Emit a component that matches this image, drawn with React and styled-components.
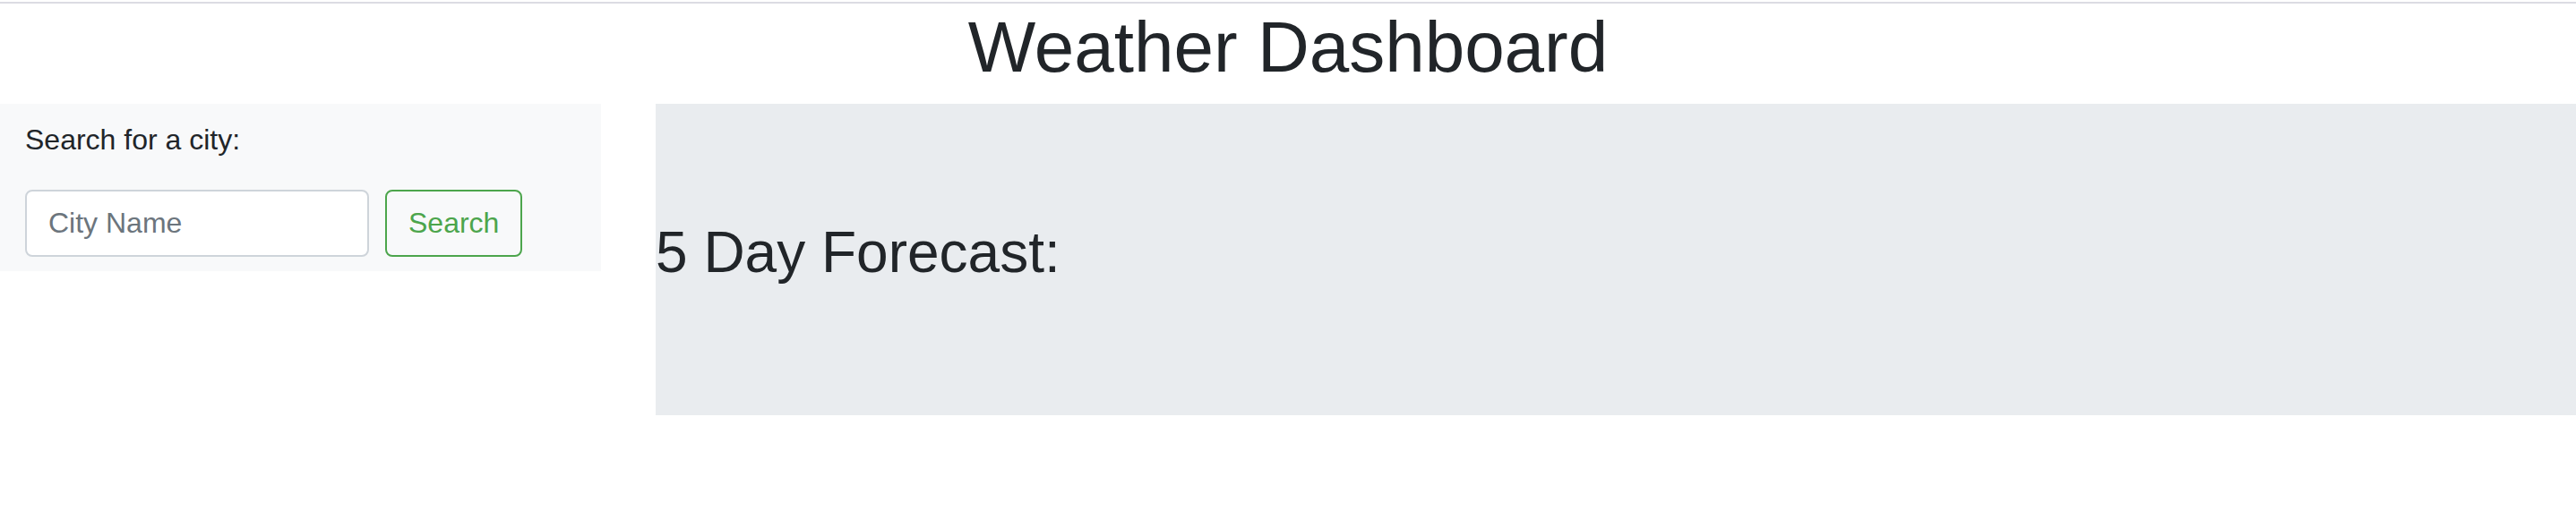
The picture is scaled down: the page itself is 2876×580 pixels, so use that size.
import React from 'react'
import styled, { createGlobalStyle } from 'styled-components'

const GlobalStyle = createGlobalStyle`
  body {
    margin: 0;
    background: #fff;
    color: #212529;
    font-family: "Liberation Sans", Arial, sans-serif;
  }
  * { box-sizing: border-box; }
`

const TopRule = styled.div`
  height: 2px;
  margin-top: 2px;
  background: #dcdce3;
`

const Title = styled.h1`
  margin: 3px 0 17px;
  font-size: 80px;
  font-weight: 400;
  line-height: 92px;
  text-align: center;
`

const Main = styled.main`
  display: flex;
  align-items: flex-start;
  gap: 61px;
`

const Sidebar = styled.aside`
  width: 671px;
  flex-shrink: 0;
  padding: 16px 28px;
  background: #f8f9fa;
`

const Label = styled.label`
  display: block;
  margin-bottom: 32px;
  font-size: 32px;
  line-height: 48px;
`

const SearchRow = styled.form`
  display: flex;
  gap: 18px;
`

const CityInput = styled.input`
  width: 384px;
  height: 75px;
  padding: 0 24px;
  border: 2px solid #ced4da;
  border-radius: 8px;
  background: #fff;
  font-family: inherit;
  font-size: 32px;
  color: #495057;
  &::placeholder { color: #6c757d; }
`

const OutlineButton = styled.button`
  height: 75px;
  padding: 0 24px;
  border: 2px solid ${p => p.color};
  border-radius: 8px;
  background: transparent;
  color: ${p => p.color};
  font-family: inherit;
  font-size: 32px;
`

const Forecast = styled.section`
  flex: 1;
  padding: 128px 0 127px;
  background: #e9ecef;
`

const ForecastTitle = styled.h2`
  margin: 0 0 16px;
  font-size: 64px;
  font-weight: 400;
  line-height: 1.2;
`

export default function App() {
  return (
    <>
      <GlobalStyle />
      <TopRule />
      <Title>Weather Dashboard</Title>
      <Main>
        <Sidebar>
          <Label htmlFor="city">Search for a city:</Label>
          <SearchRow onSubmit={e => e.preventDefault()}>
            <CityInput id="city" placeholder="City Name" />
            <OutlineButton color="#4ca54c">Search</OutlineButton>
          </SearchRow>
        </Sidebar>
        <Forecast>
          <ForecastTitle>5 Day Forecast:</ForecastTitle>
        </Forecast>
      </Main>
    </>
  )
}
